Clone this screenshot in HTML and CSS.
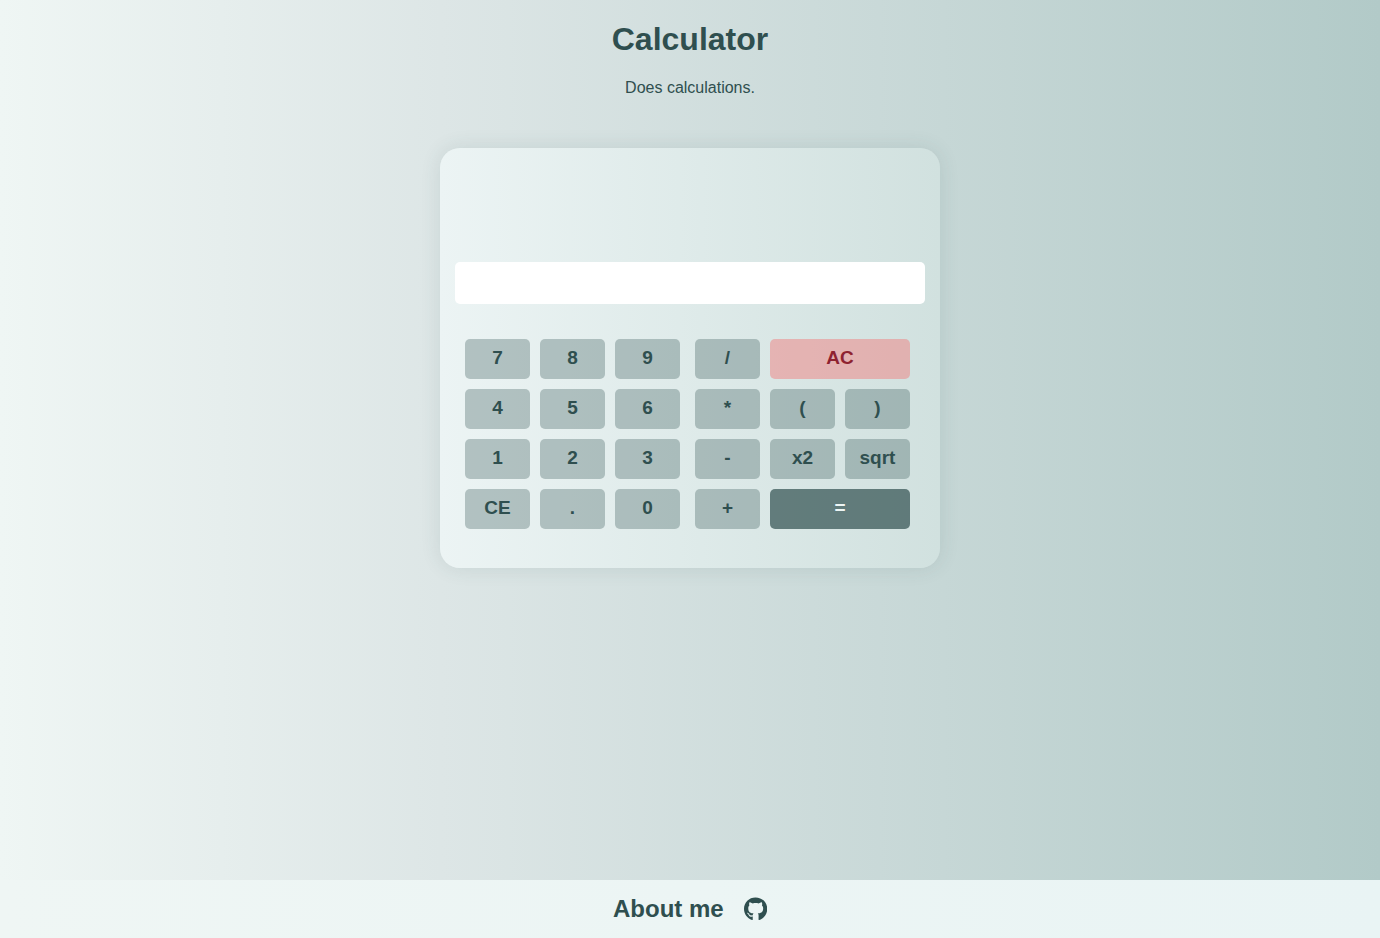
FILE: index.html
```
<!DOCTYPE html>
<html lang="en">
<head>
  <meta charset="utf-8">
  <meta name="viewport" content="width=device-width, initial-scale=1">
  <title>Calculator</title>
  <link rel="stylesheet" href="styles.css">
</head>
<body>
  <header class="header">
    <h1 class="title">Calculator</h1>
    <p class="subtitle">Does calculations.</p>
  </header>
  <main class="main">
    <form class="calculator">
      <input class="display" type="text" aria-label="Result" readonly>
      <div class="keypad">
        <div class="keys">
          <button class="key" type="button">7</button>
          <button class="key" type="button">8</button>
          <button class="key" type="button">9</button>
          <button class="key" type="button">4</button>
          <button class="key" type="button">5</button>
          <button class="key" type="button">6</button>
          <button class="key" type="button">1</button>
          <button class="key" type="button">2</button>
          <button class="key" type="button">3</button>
          <button class="key" type="button">CE</button>
          <button class="key" type="button">.</button>
          <button class="key" type="button">0</button>
        </div>
        <div class="keys">
          <button class="key" type="button">/</button>
          <button class="key key-wide key-clear" type="button">AC</button>
          <button class="key" type="button">*</button>
          <button class="key" type="button">(</button>
          <button class="key" type="button">)</button>
          <button class="key" type="button">-</button>
          <button class="key" type="button">x2</button>
          <button class="key" type="button">sqrt</button>
          <button class="key" type="button">+</button>
          <button class="key key-wide key-equals" type="button">=</button>
        </div>
      </div>
    </form>
  </main>
  <footer class="footer">
    <a class="about" href="#about">About me</a>
    <a class="github" href="#github" aria-label="GitHub">
      <svg class="github-icon" viewBox="0 0 496 512" aria-hidden="true"><path d="M165.9 397.4c0 2-2.3 3.6-5.2 3.6-3.3.3-5.6-1.3-5.6-3.6 0-2 2.3-3.6 5.2-3.6 3-.3 5.6 1.3 5.6 3.6zm-31.1-4.5c-.7 2 1.3 4.3 4.3 4.9 2.6 1 5.6 0 6.2-2s-1.3-4.3-4.3-5.2c-2.6-.7-5.5.3-6.2 2.3zm44.2-1.7c-2.9.7-4.9 2.6-4.6 4.9.3 2 2.9 3.3 5.9 2.6 2.9-.7 4.9-2.6 4.6-4.6-.3-1.9-3-3.2-5.9-2.9zM244.8 8C106.1 8 0 113.3 0 252c0 110.9 69.8 205.8 169.5 239.2 12.8 2.3 17.3-5.6 17.3-12.1 0-6.2-.3-40.4-.3-61.4 0 0-70 15-84.7-29.8 0 0-11.4-29.1-27.8-36.6 0 0-22.9-15.7 1.6-15.4 0 0 24.9 2 38.6 25.8 21.9 38.6 58.6 27.5 72.9 20.9 2.3-16 8.8-27.1 16-33.7-55.9-6.2-112.3-14.3-112.3-110.5 0-27.5 7.6-41.3 23.6-58.9-2.6-6.5-11.1-33.3 2.6-67.9 20.9-6.5 69 27 69 27 20-5.600 41.500-8.500 62.800-8.500s42.800 2.900 62.800 8.500c0 0 48.100-33.600 69-27 13.700 34.700 5.200 61.400 2.600 67.900 16 17.700 25.800 31.500 25.800 58.900 0 96.500-58.900 104.200-114.800 110.500 9.200 7.900 17 22.900 17 46.400 0 33.700-.3 75.400-.3 83.600 0 6.500 4.600 14.400 17.300 12.100C428.200 457.800 496 362.900 496 252 496 113.300 383.500 8 244.800 8zM97.200 352.900c-1.300 1-1 3.300.7 5.200 1.600 1.600 3.900 2.300 5.200 1 1.300-1 1-3.300-.7-5.200-1.600-1.600-3.900-2.300-5.200-1zm-10.800-8.100c-.7 1.300.3 2.900 2.300 3.900 1.600 1 3.600.7 4.300-.7.7-1.300-.3-2.900-2.300-3.900-2-.6-3.600-.3-4.300.7zm32.400 35.600c-1.600 1.300-1 4.300 1.300 6.200 2.300 2.300 5.200 2.600 6.500 1 1.300-1.300.7-4.300-1.300-6.200-2.200-2.300-5.200-2.600-6.500-1zm-11.400-14.700c-1.600 1-1.600 3.600 0 5.900 1.600 2.300 4.300 3.300 5.600 2.300 1.600-1.300 1.600-3.900 0-6.200-1.400-2.300-4-3.300-5.600-2z"/></svg>
    </a>
  </footer>
</body>
</html>
```
FILE: styles.css
```
* {
  box-sizing: border-box;
}

body {
  display: flex;
  flex-direction: column;
  min-height: 100vh;
  margin: 0;
  background: linear-gradient(to right, #eff6f4, #dde6e6 32%, #b2cac8);
  color: #2f4f4f;
  font-family: "Liberation Sans", Arial, sans-serif;
  font-size: 16px;
}

.header {
  padding-top: 21px;
  text-align: center;
}

.title {
  margin: 0 0 21px;
  font-size: 32px;
  line-height: 37px;
}

.subtitle {
  margin: 0;
  line-height: 18px;
}

.main {
  display: flex;
  flex: 1;
  justify-content: center;
  align-items: flex-start;
  padding: 51px 16px;
}

.calculator {
  width: 500px;
  padding: 114px 15px 39px;
  border-radius: 20px;
  background: linear-gradient(to right, #ecf4f4, #d1e1df);
  box-shadow: 0 0 20px rgba(47, 79, 79, 0.12);
}

.display {
  display: block;
  width: 100%;
  height: 42px;
  padding: 0 10px;
  border: 0;
  border-radius: 5px;
  background: #fff;
  color: inherit;
  font: inherit;
  text-align: right;
}

.keypad {
  display: flex;
  gap: 15px;
  margin-top: 35px;
  padding: 0 15px 0 10px;
}

.keys {
  display: grid;
  flex: 1;
  grid-template-columns: repeat(3, 1fr);
  grid-auto-rows: 40px;
  gap: 10px;
}

.key {
  padding: 0 0 2px;
  border: 0;
  border-radius: 5px;
  background: rgba(47, 79, 79, 0.3);
  color: inherit;
  font-family: inherit;
  font-size: 19px;
  font-weight: bold;
}

.key-wide {
  grid-column: span 2;
}

.key-clear {
  background: rgba(240, 128, 128, 0.5);
  color: #8e2230;
}

.key-equals {
  background: rgba(47, 79, 79, 0.7);
  color: #eef6f5;
}

.footer {
  display: flex;
  justify-content: center;
  align-items: center;
  gap: 20px;
  height: 58px;
  background: linear-gradient(to right, #eff6f4, #e9f4f4);
}

.about {
  color: inherit;
  font-size: 24px;
  font-weight: bold;
  text-decoration: none;
}

.github {
  display: flex;
  color: inherit;
}

.github-icon {
  height: 24px;
  fill: currentColor;
}
```
